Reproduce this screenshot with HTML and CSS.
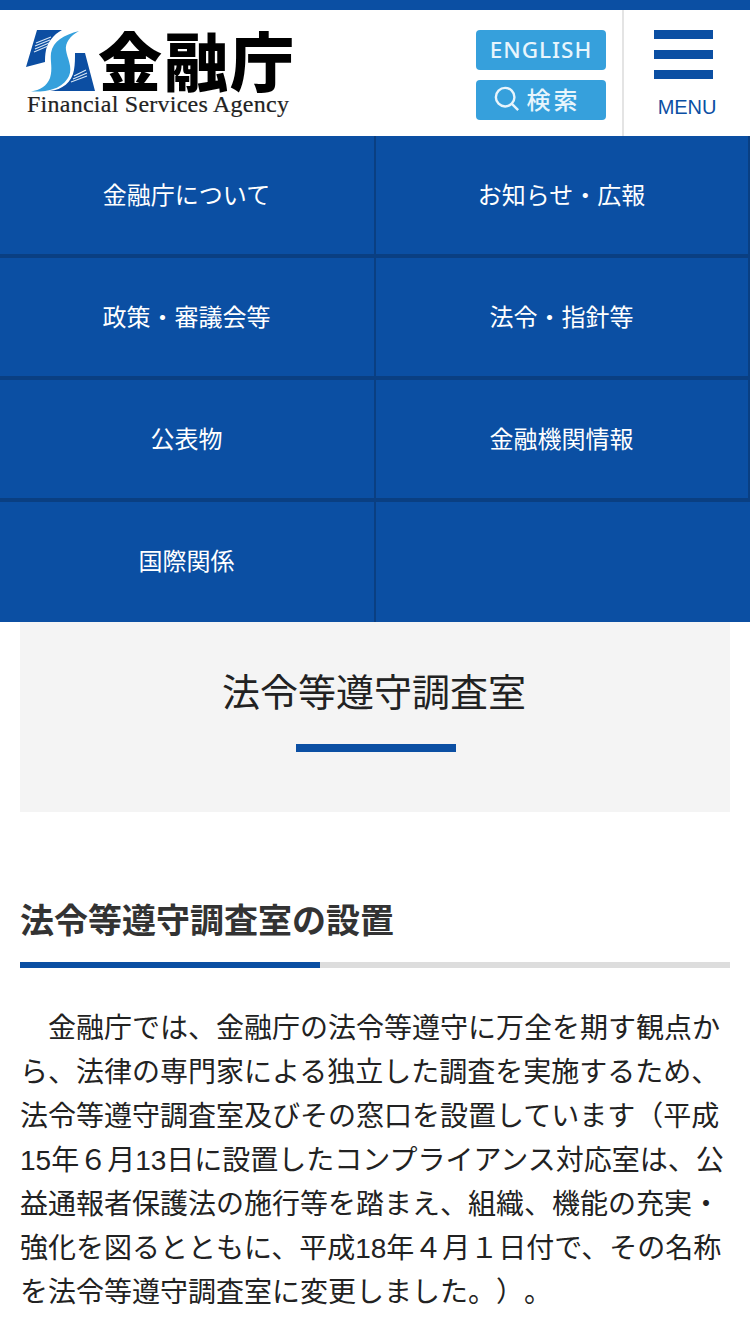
FILE: index.html
```html
<!DOCTYPE html>
<html lang="ja">
<head>
<meta charset="utf-8">
<title>法令等遵守調査室</title>
<link rel="stylesheet" href="styles.css">
</head>
<body>
<header class="header">
  <a class="logo" href="#">
    <svg class="logo-mark" viewBox="24 28 76 66" aria-hidden="true">
      <path class="mark-dark" d="M37 30H62C53 35 48 42 46 50C45 55 45 58 45 62L26 67Z"/>
      <path class="mark-dark" d="M75 53H85L95 91H50C62 90 72 82 74 70C75 64 75 58 75 53Z"/>
      <path class="mark-light" d="M79 31C64 35 53 41 51 53C50 62 53 68 50 78C47 86 40 90 31 91.5C46 92 62 90 69 76C73 67 67 58 66 50C65 43 70 36 79 31Z"/>
      <path class="mark-lines" d="M36 43L51 37M35 46L50 40M35 49L49 43M34 52L48 46M74 76L86 70M73 79L87 73M71 82L87 76"/>
    </svg>
    <span class="logo-ja">金融庁</span>
    <span class="logo-en">Financial Services Agency</span>
  </a>
  <div class="header-buttons">
    <a class="pill pill-en" href="#">ENGLISH</a>
    <a class="pill pill-search" href="#">
      <svg class="search-icon" viewBox="0 0 28 28" aria-hidden="true">
        <circle cx="12" cy="12" r="10"/>
        <path d="M19 19L26 26"/>
      </svg>
      <span>検索</span>
    </a>
  </div>
  <a class="menu" href="#">
    <span class="menu-bars"><i></i><i></i><i></i></span>
    <span class="menu-label">MENU</span>
  </a>
</header>
<nav class="nav">
  <a href="#">金融庁について</a>
  <a href="#">お知らせ・広報</a>
  <a href="#">政策・審議会等</a>
  <a href="#">法令・指針等</a>
  <a href="#">公表物</a>
  <a href="#">金融機関情報</a>
  <a class="last" href="#">国際関係</a>
  <span class="empty"></span>
</nav>
<main class="main">
  <div class="page-title"><h1>法令等遵守調査室</h1></div>
  <h2 class="section-title">法令等遵守調査室の設置</h2>
  <p class="body-text">　金融庁では、金融庁の法令等遵守に万全を期す観点から、法律の専門家による独立した調査を実施するため、法令等遵守調査室及びその窓口を設置しています（平成15年６月13日に設置したコンプライアンス対応室は、公益通報者保護法の施行等を踏まえ、組織、機能の充実・強化を図るとともに、平成18年４月１日付で、その名称を法令等遵守調査室に変更しました。）。</p>
</main>
</body>
</html>
```
FILE: styles.css
```css
* { box-sizing: border-box; }
html, body { margin: 0; padding: 0; }
body {
  width: 750px;
  height: 1334px;
  overflow: hidden;
  background: #fff;
  color: #222;
  font-family: "Liberation Sans", "Noto Sans CJK JP", sans-serif;
  text-spacing-trim: space-all;
}
a { color: inherit; text-decoration: none; }

.header {
  display: flex;
  height: 136px;
  border-top: 10px solid #0b4fa3;
  align-items: stretch;
}
.logo {
  position: relative;
  display: block;
  width: 476px;
  flex: none;
}
.logo-mark { position: absolute; left: 24px; top: 18px; width: 76px; height: 66px; }
.mark-dark { fill: #0c4ea2; }
.mark-light { fill: #35a0dc; }
.mark-lines { fill: none; stroke: #d5e6f5; stroke-width: 1.1; }
.logo-ja {
  position: absolute;
  left: 98px;
  top: 16px;
  font-family: "Noto Sans CJK JP", sans-serif;
  font-weight: 900;
  font-size: 64px;
  line-height: 64px;
  letter-spacing: 2px;
  color: #000;
  white-space: nowrap;
}
.logo-en {
  position: absolute;
  left: 27px;
  top: 80px;
  font-family: "Liberation Serif", serif;
  font-size: 24px;
  line-height: 28px;
  letter-spacing: 0.25px;
  -webkit-text-stroke: 0.2px #222;
  color: #222;
  white-space: nowrap;
}
.header-buttons {
  width: 148px;
  flex: none;
  padding-top: 20px;
  display: flex;
  flex-direction: column;
  gap: 10px;
  border-right: 2px solid #e4e4e4;
}
.pill {
  display: flex;
  align-items: center;
  justify-content: center;
  width: 130px;
  height: 40px;
  border-radius: 4px;
  background: #36a0dc;
  color: #e8f5fc;
  font-family: "Noto Sans", sans-serif;
  font-size: 22.5px;
  font-weight: 500;
  letter-spacing: 1px;
  padding-bottom: 2px;
}
.pill-search {
  gap: 7px;
  padding-right: 8px;
  font-family: "Noto Sans CJK JP", sans-serif;
  font-size: 24px;
  letter-spacing: 3px;
  font-weight: 500;
  padding-bottom: 2px;
}
.pill-search span { line-height: 24px; }
.search-icon { width: 26px; height: 26px; fill: none; stroke: #e8f5fc; stroke-width: 2.6; }
.menu {
  flex: 1;
  display: flex;
  flex-direction: column;
  align-items: center;
  padding-top: 20px;
}
.menu-bars { display: flex; flex-direction: column; gap: 11px; width: 59px; margin-left: -7px; }
.menu-bars i { display: block; height: 9px; background: #0b4fa3; }
.menu-label { margin-top: 16px; font-size: 20px; line-height: 24px; color: #0b4fa3; letter-spacing: -0.1px; }

.nav {
  display: grid;
  grid-template-columns: 376px 374px;
  grid-auto-rows: 122px;
  background: #0b4fa3;
  height: 486px;
  color: #fff;
  font-size: 24px;
}
.nav a {
  display: flex;
  align-items: center;
  justify-content: center;
  padding-bottom: 4px;
  padding-right: 1px;
  border-right: 2px solid #0a3f82;
  border-bottom: 4px solid #0a3f82;
}
.nav .last { border-bottom: 0; height: 120px; padding-bottom: 6px; }

.main { padding: 0 20px; }
.page-title {
  height: 190px;
  background: #f4f4f4;
  padding-top: 44px;
  display: flex;
  flex-direction: column;
  align-items: center;
}
.page-title h1 {
  margin: 0 2px 0 0;
  font-size: 38px;
  line-height: 54px;
  font-weight: 400;
  color: #222;
}
.page-title h1::after {
  content: "";
  display: block;
  width: 160px;
  height: 8px;
  margin: 24px 0 0 74px;
  background: #0b4fa3;
}
.section-title {
  margin: 84px 0 0;
  padding-top: 1px;
  padding-bottom: 17px;
  font-size: 34px;
  line-height: 48px;
  font-weight: 700;
  color: #333;
  border-bottom: 6px solid #ddd;
  position: relative;
}
.section-title::after {
  content: "";
  position: absolute;
  left: 0;
  bottom: -6px;
  width: 300px;
  height: 6px;
  background: #0b4fa3;
}
.body-text {
  margin: 39px 0 0;
  font-size: 28px;
  line-height: 44px;
  color: #222;
}
```
